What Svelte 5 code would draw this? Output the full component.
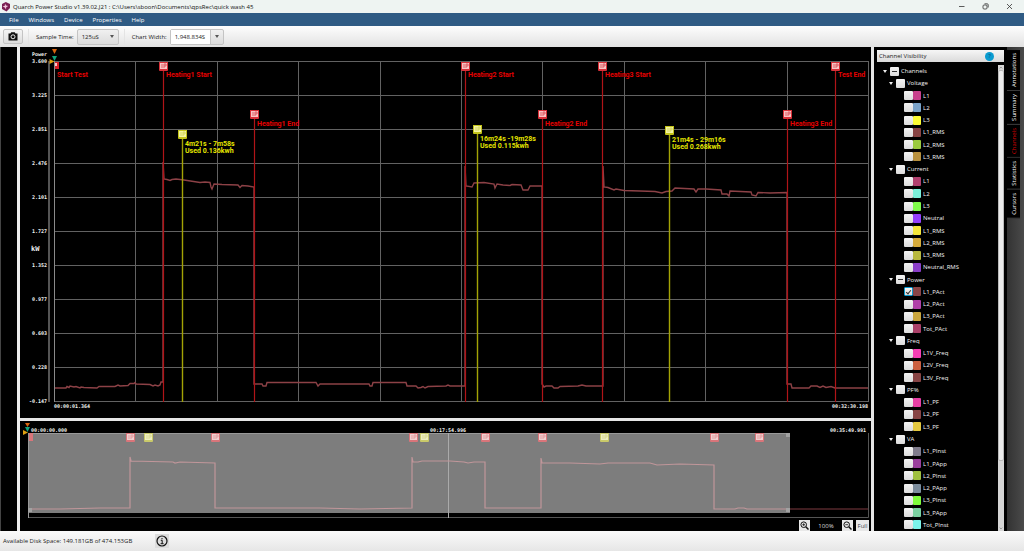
<script>
    const menus = ["File", "Windows", "Device", "Properties", "Help"];
    const sideTabs = ["Annotations", "Summary", "Channels", "Statistics", "Cursors"];

    const groups = [
        {
            name: "Voltage",
            channels: [
                ["L1", "#c8408c"],
                ["L2", "#7ba3c8"],
                ["L3", "#fbfb35"],
                ["L1_RMS", "#884444"],
                ["L2_RMS", "#9bca3e"],
                ["L3_RMS", "#b8903e"],
            ],
        },
        {
            name: "Current",
            channels: [
                ["L1", "#b0406e"],
                ["L2", "#7cf0da"],
                ["L3", "#80fb4a"],
                ["Neutral", "#9440fb"],
                ["L1_RMS", "#f4e63c"],
                ["L2_RMS", "#d6ab3c"],
                ["L3_RMS", "#b8b83e"],
                ["Neutral_RMS", "#8a3ec8"],
            ],
        },
        {
            name: "Power",
            partial: true,
            channels: [
                ["L1_PAct", "#884446"],
                ["L2_PAct", "#b040a8"],
                ["L3_PAct", "#caa63e"],
                ["Tot_PAct", "#ab4068"],
            ],
        },
        {
            name: "Freq",
            channels: [
                ["L1V_Freq", "#f53fb4"],
                ["L2V_Freq", "#cb6040"],
                ["L3V_Freq", "#884444"],
            ],
        },
        {
            name: "PF%",
            channels: [
                ["L1_PF", "#e63fa4"],
                ["L2_PF", "#884444"],
                ["L3_PF", "#e4c840"],
            ],
        },
        {
            name: "VA",
            channels: [
                ["L1_PInst", "#807c8c"],
                ["L1_PApp", "#9a3f9c"],
                ["L2_PInst", "#a0c040"],
                ["L2_PApp", "#7c8c9c"],
                ["L3_PInst", "#80fb3c"],
                ["L3_PApp", "#7cd0a0"],
                ["Tot_PInst", "#7cf4ea"],
            ],
        },
    ];

    let selected = { Power: ["L1_PAct"] };
    let activeTab = "Channels";

    const yLabels = ["3.600", "3.225", "2.851", "2.476", "2.101", "1.727", "1.352", "0.977", "0.603", "0.228", "-0.147"];

    const markers = [
        { x: 163, y: 62, text: "Heating1 Start" },
        { x: 254, y: 110, text: "Heating1 End" },
        { x: 465, y: 62, text: "Heating2 Start" },
        { x: 542, y: 110, text: "Heating2 End" },
        { x: 602, y: 62, text: "Heating3 Start" },
        { x: 787, y: 110, text: "Heating3 End" },
        { x: 835, y: 62, text: "Test End" },
    ];

    const notes = [
        { x: 182, y: 130, lines: ["4m21s - 7m58s", "Used 0.136kwh"] },
        { x: 477, y: 125, lines: ["16m24s -19m28s", "Used 0.115kwh"] },
        { x: 669, y: 126, lines: ["21m4s - 29m16s", "Used 0.268kwh"] },
    ];

    const overviewMarkers = [130, 215, 413, 485, 542, 714, 759];
    const overviewNotes = [148, 424, 604];

    const trace = [
        [55, 388], [66, 388], [67, 386.5], [69, 387.5], [70, 386], [74, 387], [76, 386.5], [80, 388],
        [81, 387], [84, 387.5], [97, 388], [99, 386.5], [115, 386.5], [118, 385], [120, 386], [128, 385.5],
        [130, 383.5], [134, 383.5], [135, 382.5], [136, 384], [150, 384.5], [153, 386], [155, 385],
        [158, 386], [160, 385], [161, 382], [163, 382], [163, 162], [164, 179], [167, 179.5],
        [170, 180.5], [172, 179.5], [176, 179], [184, 180], [200, 182.5], [205, 182], [210, 182.5],
        [211, 187], [212, 189], [214, 184], [222, 184.5], [238, 185], [240, 187.5], [242, 185.5],
        [248, 186], [254, 187], [254, 384], [262, 384], [263, 386], [266, 386], [267, 382.5],
        [316, 382.5], [318, 386], [320, 384], [369, 384], [370, 386], [372, 386], [373, 382.5],
        [406, 382.5], [407, 386], [416, 386], [418, 388], [421, 387.5], [423, 386.5], [425, 388],
        [428, 386.5], [446, 386], [448, 385], [450, 386], [464, 386], [465, 386], [465, 166],
        [466, 186], [472, 187], [474, 183], [484, 182.5], [494, 184], [495, 188], [497, 184],
        [503, 185], [510, 185.5], [512, 184.5], [521, 185], [523, 190], [528, 190], [530, 186],
        [542, 186], [542, 384], [544, 387], [546, 386], [552, 386], [554, 388], [558, 388],
        [560, 386.5], [578, 386], [582, 385], [586, 386], [602, 386], [603, 386], [603, 166],
        [604, 187], [608, 187.5], [614, 190], [616, 189], [624, 190.5], [640, 191], [655, 191.5],
        [662, 193], [666, 191.5], [672, 191], [675, 188], [694, 189], [696, 192], [698, 189],
        [706, 189], [721, 190], [722, 194], [727, 194], [729, 196], [730, 191], [751, 192],
        [752, 195], [756, 196], [758, 192.5], [770, 193], [787, 192.5], [787, 384], [791, 384],
        [792, 388], [809, 388], [811, 386], [817, 386], [820, 387.5], [823, 386], [826, 387.5],
        [831, 386.5], [835, 388], [868, 388],
    ];

    const overviewTrace = [
        [29, 509], [60, 509], [100, 508], [130, 508], [130, 457], [131, 461], [173, 462], [175, 463],
        [180, 462], [215, 463], [215, 508], [235, 508], [320, 508], [360, 509], [412, 508], [412, 457],
        [413, 462], [418, 462], [422, 461], [450, 461], [464, 462], [468, 463], [474, 462], [485, 462],
        [485, 508], [541, 508], [541, 458], [542, 463], [570, 463], [600, 464], [608, 463], [630, 463],
        [650, 463], [657, 465], [680, 464], [714, 465], [714, 509], [735, 509], [738, 508], [744, 508],
        [747, 509], [868, 509],
    ];

    const toPoints = (list) => list.map((p) => p.join(",")).join(" ");
</script>

{#snippet flag(x, y, edge, fill, ink)}
    <path d="M{x - 4.5} {y}h9v8q0 1-1 1h-7q-1 0-1-1z" fill={edge} />
    <rect x={x - 3.5} y={y + 1} width="7" height="6" fill={fill} />
    <path d="M{x - 1.5} {y + 2}v4m2 0v-4h2v2h-2" fill="none" stroke={ink} stroke-width=".8" />
{/snippet}

{#snippet magnifier(sign)}
    <svg width="9" height="9" viewBox="0 0 9 9" fill="none" stroke="#111">
        <circle cx="3.7" cy="3.7" r="2.8" />
        <path d="M5.8 5.8 8.5 8.5" stroke-width="1.5" />
        <path d={sign} stroke-width=".8" />
    </svg>
{/snippet}

<div class="app">
    <header class="titlebar">
        <svg class="logo" width="10" height="10" viewBox="0 0 10 10">
            <path d="M1 2 4.8 0 9 2v4L5.5 9.6 1 7z" fill="#7a1f52" />
            <path d="M4 1.5 5 3.5 7.2 4 5.2 5.2 5 7.5 3.8 5.6 1.6 4.6 3.8 3.7z" fill="#f3c6dc" />
        </svg>
        <span class="title">Quarch Power Studio v1.39.02.J21 : C:\Users\sboon\Documents\qpsRec\quick wash 45</span>
        <div class="window_buttons">
            <button aria-label="Minimize"><svg width="7" height="7" viewBox="0 0 7 7"><path d="M1 3.5h5.5" /></svg></button>
            <button aria-label="Restore"><svg width="7" height="7" viewBox="0 0 7 7"><rect x="1" y="2" width="4" height="4" rx="1" /><path d="M2.5.8h2.7q1 0 1 1v2.7" /></svg></button>
            <button aria-label="Close"><svg width="7" height="7" viewBox="0 0 7 7"><path d="m1 1 5 5m0-5-5 5" /></svg></button>
        </div>
    </header>

    <nav class="menubar">
        {#each menus as menu}
            <button>{menu}</button>
        {/each}
    </nav>

    <div class="toolbar">
        <button class="camera" aria-label="Take snapshot">
            <svg width="10" height="9" viewBox="0 0 10 9">
                <path d="M.5 1.5h2L3.2.3h3.6l.7 1.2h2v7h-9z" fill="#111" />
                <circle cx="5" cy="4.8" r="2" fill="#111" stroke="#fff" stroke-width=".9" />
            </svg>
        </button>
        <div class="field">
            <label for="sample">Sample Time:</label>
            <div class="combo">
                <select id="sample">
                    <option>125uS</option>
                </select>
                <span class="arrow"></span>
            </div>
        </div>
        <div class="field">
            <label for="chart_width">Chart Width:</label>
            <div class="combo editable">
                <input id="chart_width" type="text" value="1,948.834S" />
                <button aria-label="Chart width options"><span class="arrow"></span></button>
            </div>
        </div>
    </div>

    <main>
        <div class="gutter"></div>

        <div class="charts">
            <svg class="chart" viewBox="20 47 851 371">
                <g stroke="#626262">
                    {#each yLabels as _, i}
                        <path d="M54 {61.5 + i * 34}H869" />
                        <path d="M{Math.round(54 + i * 81.4) + 0.5} 61V402" />
                    {/each}
                </g>
                <path d="M49 61V402" stroke="#555" stroke-width="2" />
                <g class="mono">
                    {#each yLabels as label, i}
                        <text x="47" y={63 + i * 34} text-anchor="end">{label}</text>
                    {/each}
                    <text x="47" y="56" text-anchor="end">Power</text>
                    <text class="unit" x="31" y="251">kW</text>
                    <text x="54" y="408">00:00:01.364</text>
                    <text x="868" y="408" text-anchor="end">00:32:30.198</text>
                </g>
                <path d="M52 49h5l-2.500 5z" fill="#d9650f" />
                <path d="M52 56h5l-2.500 5z" fill="#12a37c" />
                <path d="M49.500 59v5l5-2.500z" fill="#e0a112" />

                <polyline points={toPoints(trace)} fill="none" stroke="#8c4146" stroke-width="1.4" />

                {#each markers as m}
                    <path d="M{m.x + 0.5} {m.y + 8}V402" stroke="#b01418" stroke-width="1.2" />
                    {@render flag(m.x + 0.5, m.y, "#d83038", "#f8c4c4", "#d8484e")}
                    <text class="tag" x={m.x + 3} y={m.y === 62 ? 77 : 126}>{m.text}</text>
                {/each}
                <path d="M54.500 61V402" stroke="#8a8a8a" />
                <path d="M55 62h4v7h-4z" fill="#d81e26" />
                <path d="M55 63h2v3h-2z" fill="#ffc4c4" />
                <text class="tag" x="57" y="77">Start Test</text>

                {#each notes as n}
                    <path d="M{n.x + 0.5} {n.y + 8}V402" stroke="#a3a305" stroke-width="1.4" />
                    {@render flag(n.x + 0.5, n.y, "#c3c31a", "#f4f4a4", "#d0d050")}
                    {#each n.lines as line, i}
                        <text class="tag note" x={n.x + 3} y={n.y + 16 + i * 7}>{line}</text>
                    {/each}
                {/each}
            </svg>

            <div class="overview">
                <svg class="chart" viewBox="20 421 851 110">
                    <path d="M28 517.500H868.500V433" fill="none" stroke="#555" />
                    <polyline points={toPoints(overviewTrace)} fill="none" stroke="#7e3a40" />
                    <rect x="28" y="433" width="762" height="80" fill="#7d7d7d" />
                    <path d="M28.500 433V518" stroke="#999" />
                    <path d="M28 433.500H790" stroke="#999" />
                    <path d="M448.500 433V518" stroke="#aaa" />
                    <polyline points={toPoints(overviewTrace.slice(0, -1)) + " 790,509"} fill="none" stroke="#c0969a" stroke-width="1.200" />
                    <g fill="#a2a2a2">
                        <rect x="28" y="508" width="4" height="4" />
                        <rect x="786" y="433" width="4" height="4" />
                        <rect x="786" y="508" width="4" height="4" />
                    </g>
                    <path d="M29 433h4v8h-4z" fill="#d9757a" />
                    {#each overviewMarkers as x}
                        {@render flag(x + 0.5, 433, "#d9757a", "#f2d0d0", "#de9498")}
                    {/each}
                    {#each overviewNotes as x}
                        {@render flag(x + 0.5, 433, "#c9c96a", "#eeeec0", "#d4d48a")}
                    {/each}
                    <g class="mono">
                        <text x="31" y="432">00:00:00.000</text>
                        <text x="448" y="432" text-anchor="middle">00:17:54.996</text>
                        <text x="866" y="432" text-anchor="end">00:35:49.991</text>
                    </g>
                    <path d="M25 423h5l-2.500 4z" fill="#d9650f" />
                    <path d="M25 427h5l-2.500 5z" fill="#12a37c" />
                    <path d="M23 430v5l5-2.500z" fill="#e0a112" />
                </svg>
                <div class="zoom">
                    <button aria-label="Zoom in">{@render magnifier("M2.3 3.7h2.8M3.7 2.3v2.8")}</button>
                    <span>100%</span>
                    <button aria-label="Zoom out">{@render magnifier("M2.3 3.7h2.8")}</button>
                    <button class="full">Full</button>
                </div>
            </div>
        </div>

        <aside>
            <div class="panel_head">
                <h2>Channel Visibility</h2>
                <button aria-label="Help">?</button>
            </div>
            <div class="panel_body">
                <div class="tree">
                    <label class="row root">
                        <span class="caret"></span>
                        <input type="checkbox" indeterminate={true} />
                        Channels
                    </label>
                    {#each groups as group}
                        <label class="row group">
                            <span class="caret"></span>
                            <input type="checkbox" indeterminate={group.partial} />
                            {group.name}
                        </label>
                        {#each group.channels as [name, color]}
                            <label class="row channel">
                                <input type="checkbox" checked={selected[group.name]?.includes(name)} />
                                <span class="swatch" style="background: {color}"></span>
                                {name}
                            </label>
                        {/each}
                    {/each}
                </div>
                <div class="scrollbar">
                    <svg width="7" height="5" viewBox="0 0 7 5"><path d="m2 3.500 1.500-1.500L5 3.500" /></svg>
                    <div class="thumb"></div>
                    <svg width="7" height="5" viewBox="0 0 7 5"><path d="m2 1.500 1.500 1.500L5 1.500" /></svg>
                </div>
            </div>
        </aside>

        <div class="side_tabs">
            {#each sideTabs as tab}
                <button class:active={tab === activeTab} on:click={() => (activeTab = tab)}>{tab}</button>
            {/each}
        </div>
    </main>

    <footer>
        <span>Available Disk Space: 149.181GB of 474.153GB</span>
        <button aria-label="Information">
            <svg width="12" height="12" viewBox="0 0 12 12" fill="none" stroke="#111">
                <circle cx="6" cy="6" r="5" stroke-width="1.2" />
                <path d="M4.800 5.300H6.200V8.600M4.600 8.700h3M6 3v1.200" />
            </svg>
        </button>
    </footer>
</div>

<style>
    :global(body) {
        background: #000;
    }

    .app {
        display: flex;
        flex-direction: column;
        height: 100vh;
        box-sizing: border-box;
        overflow: hidden;
        font-family: "Open Sans", "Noto Sans", sans-serif;
        font-size: 6px;
        line-height: 8px;
        color: #222;
    }

    button,
    input,
    select {
        font: inherit;
        color: inherit;
        margin: 0;
        padding: 0;
        border: none;
        background: none;
        box-sizing: border-box;
    }

    svg {
        display: block;
        flex: none;
    }

    .titlebar {
        display: flex;
        align-items: center;
        height: 13px;
        padding-left: 1px;
        gap: 2px;
        background: #eef4f2;
        color: #111;
    }

    .window_buttons {
        display: flex;
        gap: 17px;
        margin-left: auto;
        padding-right: 11px;
    }

    .window_buttons svg {
        fill: none;
        stroke: #333;
        stroke-width: 0.8;
    }

    .menubar {
        display: flex;
        align-items: center;
        gap: 10px;
        height: 13px;
        padding-left: 9px;
        background: #2f5b84;
        color: #fff;
    }

    .toolbar {
        display: flex;
        align-items: center;
        height: 21px;
        padding-left: 3px;
        background: linear-gradient(#fdfdfd, #e2e2e2);
    }

    .camera {
        display: grid;
        place-items: center;
        width: 20px;
        height: 15px;
        border: 1px solid #c4c4c4;
        border-radius: 2px;
        background: linear-gradient(#f4f4f4, #dedede);
    }

    .field {
        display: flex;
        align-items: center;
        gap: 3px;
        margin-left: 5px;
        padding-left: 7px;
        border-left: 1px solid #e4e4e4;
    }

    .combo {
        display: flex;
        align-items: center;
        width: 42px;
        height: 16px;
        box-sizing: border-box;
        border: 1px solid #c4c4c4;
        border-radius: 2px;
        background: linear-gradient(#f0f0f0, #dcdcdc);
    }

    .combo select {
        appearance: none;
        flex: 1;
        padding-left: 4px;
    }

    .combo .arrow {
        margin-right: 4px;
    }

    .editable {
        width: 54px;
    }

    .editable input {
        width: 40px;
        height: 100%;
        padding-left: 4px;
        border-right: 1px solid #c4c4c4;
        background: #fff;
    }

    .editable button {
        flex: 1;
        display: grid;
        place-items: center;
    }

    .editable .arrow {
        margin: 0;
    }

    .arrow,
    .caret {
        width: 0;
        border: 2px solid transparent;
        border-top: 3px solid #555;
        border-bottom: none;
    }

    main {
        display: flex;
        flex: 1;
        min-height: 0;
        background: #000;
    }

    .gutter {
        width: 16px;
        border-left: 1px solid #444;
        border-right: 3px solid #eee;
    }

    .charts {
        display: flex;
        flex-direction: column;
        flex: 1;
        min-width: 0;
        border-right: 3px solid #e6e6e6;
    }

    .chart {
        width: 100%;
    }

    .overview {
        position: relative;
        flex: 1;
        border-top: 3px solid #e6e6e6;
    }

    .mono {
        font-family: "DejaVu Sans Mono", monospace;
        font-size: 5px;
        font-weight: bold;
        fill: #f0f0f0;
    }

    .unit {
        font-size: 7px;
    }

    .tag {
        font-family: Roboto, sans-serif;
        font-size: 7px;
        font-weight: bold;
        fill: #e60000;
    }

    .note {
        fill: #e6e600;
    }

    .zoom {
        position: absolute;
        right: 2px;
        bottom: 0;
        display: flex;
        align-items: center;
        gap: 3px;
        color: #ddd;
    }

    .zoom span {
        width: 26px;
        text-align: center;
    }

    .zoom button {
        display: grid;
        place-items: center;
        width: 11px;
        height: 11px;
        background: #e8e8e8;
    }

    .zoom .full {
        width: 13px;
        color: #3e4854;
    }

    aside {
        display: flex;
        flex-direction: column;
        width: 133px;
    }

    .panel_head {
        display: flex;
        align-items: center;
        justify-content: space-between;
        height: 12px;
        margin: 3px;
        padding: 0 10px 0 2px;
        box-sizing: border-box;
        background: linear-gradient(#f6f6f6, #dadada);
    }

    h2 {
        margin: 0;
        font-size: 6px;
        font-weight: normal;
    }

    .panel_head button {
        width: 9px;
        height: 9px;
        border-radius: 50%;
        background: #0a9bd0;
        color: #0b4f78;
        line-height: 9px;
    }

    .panel_body {
        display: flex;
        flex: 1;
        min-height: 0;
    }

    .tree {
        display: grid;
        grid-auto-rows: 1fr;
        flex: 1;
        color: #f4f4f4;
    }

    .row {
        display: flex;
        align-items: center;
        min-height: 0;
    }

    .row .caret {
        margin-right: 3px;
        border-top-color: #eee;
    }

    .root {
        padding-left: 9px;
    }

    .group {
        padding-left: 15px;
    }

    .channel {
        padding-left: 30px;
    }

    .row input {
        appearance: none;
        display: grid;
        place-items: center;
        width: 9px;
        height: 9px;
        margin-right: 2px;
        border-radius: 1px;
        background: linear-gradient(#f4f4f4, #dcdcdc);
    }

    .channel input {
        margin-right: 0;
    }

    .row input:indeterminate::before {
        content: "";
        width: 5px;
        height: 1px;
        background: #333;
    }

    .row input:checked {
        border: 1px solid #0a9bd0;
    }

    .row input:checked::before {
        content: "";
        width: 4px;
        height: 2px;
        border-left: 1px solid #333;
        border-bottom: 1px solid #333;
        transform: rotate(-50deg);
    }

    .swatch {
        width: 8px;
        height: 9px;
        margin-right: 2px;
        border-radius: 1px;
    }

    .scrollbar {
        display: flex;
        flex-direction: column;
        justify-content: space-between;
        width: 6px;
        margin-right: 3px;
        background: #d6d6d6;
    }

    .scrollbar svg {
        width: 100%;
        fill: none;
        stroke: #888;
    }

    .thumb {
        height: 84%;
        margin-bottom: auto;
        box-sizing: border-box;
        border: 1px solid #bbb;
        border-radius: 2px;
        background: #ececec;
    }

    .side_tabs {
        display: flex;
        flex-direction: column;
        align-items: flex-start;
        width: 17px;
        padding-top: 3px;
        box-sizing: border-box;
        background: linear-gradient(to right, #333, #4a4a4a);
    }

    .side_tabs button {
        width: 13px;
        padding: 3px 2px;
        border-top: 1px solid #444;
        background: #000;
        color: #fff;
        writing-mode: vertical-rl;
        transform: rotate(180deg);
    }

    .side_tabs .active {
        color: #d80000;
    }

    footer {
        display: flex;
        align-items: center;
        gap: 23px;
        height: 20px;
        padding-left: 3px;
        background: linear-gradient(#fafafa, #e6e6e6);
    }

    footer button {
        display: grid;
        place-items: center;
        width: 14px;
        height: 14px;
        background: #ddd;
    }
</style>
